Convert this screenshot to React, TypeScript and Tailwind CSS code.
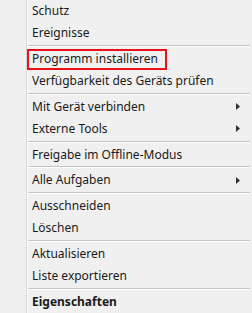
import React from "react";

type Entry = { label: string; sub?: boolean; bold?: boolean; boxed?: boolean } | "sep";

const entries: Entry[] = [
  { label: "Schutz" },
  { label: "Ereignisse" },
  "sep",
  { label: "Programm installieren", boxed: true },
  { label: "Verfügbarkeit des Geräts prüfen" },
  "sep",
  { label: "Mit Gerät verbinden", sub: true },
  { label: "Externe Tools", sub: true },
  "sep",
  { label: "Freigabe im Offline-Modus" },
  "sep",
  { label: "Alle Aufgaben", sub: true },
  "sep",
  { label: "Ausschneiden" },
  { label: "Löschen" },
  "sep",
  { label: "Aktualisieren" },
  { label: "Liste exportieren" },
  "sep",
  { label: "Eigenschaften", bold: true },
];

const Arrow = () => (
  <svg width="4" height="7" viewBox="0 0 4 7" className="shrink-0">
    <path d="M0 0 L4 3.5 L0 7 Z" fill="#303030" />
  </svg>
);

export default function App() {
  return (
    <div
      className="flex w-[252px] h-[313px] overflow-hidden bg-[#f0f0f0] text-[12px] text-[#1a1a1a]"
      style={{ fontFamily: "'Noto Sans', 'Segoe UI', sans-serif" }}
    >
      <div className="w-[27px] shrink-0 border-r border-[#d5d5d5]" />
      <div className="flex flex-col flex-1 border-l border-white">
        {entries.map((e, i) =>
          e === "sep" ? (
            <div key={i} className="h-[4px] pr-[2px] pt-px">
              <div className="h-px bg-[#c5c5c5]" />
              <div className="h-px bg-white" />
            </div>
          ) : e.boxed ? (
            <div key={i} className="h-[22px] pt-px -ml-px">
              <div className="w-[140px] h-[21px] flex items-center pl-[3px] border-2 border-[#e8121a]">
                <span className="leading-none">{e.label}</span>
              </div>
            </div>
          ) : (
            <div key={i} className="h-[22px] flex items-center justify-between pl-[4px] pr-[12px]">
              <span className={`leading-none ${e.bold ? "font-bold" : ""}`}>{e.label}</span>
              {e.sub && <Arrow />}
            </div>
          )
        )}
      </div>
    </div>
  );
}
